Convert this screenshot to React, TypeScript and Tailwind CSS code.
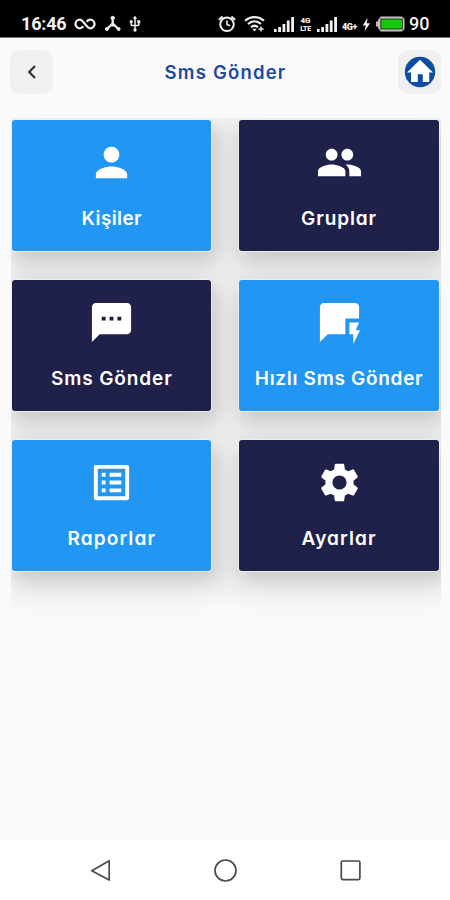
import React from 'react';
import type { IconType } from 'react-icons';
import { MdPerson, MdPeople, MdSms, MdQuickreply, MdListAlt, MdSettings, MdUsb } from 'react-icons/md';

interface MenuItem {
  label: string;
  icon: IconType;
  color: string;
  text: string;
}

const menuItems: MenuItem[] = [
  { label: 'Kişiler', icon: MdPerson, color: 'bg-[#2196f3]', text: 'tracking-[0.4px]' },
  { label: 'Gruplar', icon: MdPeople, color: 'bg-[#20214a]', text: 'tracking-[0.9px]' },
  { label: 'Sms Gönder', icon: MdSms, color: 'bg-[#20214a]', text: 'tracking-[0.9px]' },
  { label: 'Hızlı Sms Gönder', icon: MdQuickreply, color: 'bg-[#2196f3]', text: 'tracking-[0.7px]' },
  { label: 'Raporlar', icon: MdListAlt, color: 'bg-[#2196f3]', text: 'tracking-[1.1px]' },
  { label: 'Ayarlar', icon: MdSettings, color: 'bg-[#20214a]', text: 'tracking-[1.1px]' },
];

const SignalBars: React.FC<{ className?: string }> = ({ className }) => (
  <svg className={className} width="21" height="17" viewBox="0 0 21 17" fill="#f2f2f2">
    <rect x="0" y="13" width="2.6" height="3" />
    <rect x="4.2" y="11" width="2.8" height="5" />
    <rect x="8.5" y="8" width="2.8" height="8" />
    <rect x="12.8" y="4.5" width="2.8" height="11.5" />
    <rect x="17.2" y="1" width="2.8" height="15" />
  </svg>
);

const StatusBar: React.FC = () => (
  <div className="h-[38px] bg-black flex items-center pt-[11px] text-[#f2f2f2] border-b border-[#777] font-[Roboto,sans-serif] shrink-0">
    <span className="ml-[21px] w-[46px] text-[18px] leading-none font-bold tracking-[-0.2px]">16:46</span>
    <svg className="ml-[7px]" width="22" height="14" viewBox="0 0 22 14" fill="none" stroke="#eee" strokeWidth="2.3">
      <path d="M9.300 9.300C8.300 10.600 7.200 11.300 5.800 11.300a4.300 4.300 0 0 1 0-8.600C9.500 2.700 12.500 11.300 16.200 11.300a4.300 4.300 0 0 0 0-8.600C14.800 2.700 13.700 3.400 12.700 4.700" />
    </svg>
    <svg className="ml-[8px]" width="18" height="18" viewBox="0 0 18 18" fill="#eee" stroke="#eee">
      <path d="M8.700 3v5.500M8.700 8.500 3.500 13.500M8.700 8.500 14 13.500" fill="none" strokeWidth="2.200" />
      <path d="M8.700 6 5.500 11.500h6.400z" stroke="none" />
      <circle cx="8.700" cy="3" r="1.700" />
      <circle cx="2.900" cy="14" r="1.500" />
      <circle cx="14.600" cy="14" r="1.500" />
    </svg>
    <MdUsb className="ml-[4px] w-[18px] h-[18px]" />

    <svg className="ml-[73px]" width="20" height="18" viewBox="0 0 20 18" fill="none" stroke="#eee" strokeWidth="2">
      <circle cx="10" cy="9.300" r="6.800" />
      <path d="M10 5.500v4l3 1.300" strokeWidth="1.600" />
      <path d="M1.800 4.800 5.600 1.600M18.200 4.800 14.400 1.600" />
    </svg>
    <svg className="ml-[7px]" width="21" height="18" viewBox="0 0 21 18" fill="none" stroke="#eee" strokeWidth="2.200">
      <path d="M1 5.800C6.500.9 14.500.9 20 5.800M4 9c4-3.500 9-3.500 13 0M7 12.200c2.300-1.900 4.700-1.900 7 0" />
      <path d="M8.300 13.700h4.400L10.500 16.500z" fill="#eee" stroke="none" />
      <path d="M17 11.500v5M14.500 14h5" strokeWidth="1.400" />
    </svg>
    <SignalBars className="ml-[9px]" />
    <div className="ml-[4px] w-[13px] flex flex-col items-center font-black">
      <span className="text-[8px] leading-[9px]">4G</span>
      <span className="text-[7px] leading-[8px] tracking-[-0.3px]">LTE</span>
    </div>
    <SignalBars className="ml-[5px]" />
    <span className="ml-[4px] mt-[6px] w-[18px] text-[9px] leading-none font-black tracking-[-0.4px]">4G+</span>
    <svg className="ml-[2px]" width="9" height="15" viewBox="0 0 10 15" fill="#eee">
      <path d="M6.200 0 .8 8.500h3.400L2.800 15 9 6H5.300z" />
    </svg>
    <svg className="ml-[5px]" width="30" height="16" viewBox="0 0 30 16">
      <path d="M0 5.500h2V4l2.800-3.500H26L28.500 3v10L26 15.500H4.800L2 12v-1.500H0z" fill="#c3bfc3" />
      <rect x="4.800" y="3" width="21.500" height="10" fill="#14c80b" stroke="#171f15" strokeWidth=".8" />
    </svg>
    <span className="ml-[3px] text-[18px] leading-none font-medium">90</span>
  </div>
);

const Header: React.FC = () => (
  <header className="flex items-center justify-between pl-[10px] pr-[9px] pt-3 shrink-0">
    <button className="w-[43px] h-[44px] rounded-[10px] bg-[#f0f0f0] flex items-center justify-center">
      <svg width="12" height="16" viewBox="0 0 12 16" fill="none" stroke="#333" strokeWidth="2.200">
        <path d="M9 2 3.200 8 9 14" />
      </svg>
    </button>
    <h1 className="text-[18.500px] leading-6 font-semibold text-[#204a9b] tracking-[1.200px]">Sms Gönder</h1>
    <button className="w-[43px] h-[44px] rounded-[10px] bg-[#f0f0f0] flex items-center justify-center">
      <svg width="32" height="32" viewBox="0 0 32 32">
        <circle cx="16" cy="16" r="15.200" fill="#0b4da2" />
        <path d="M16 3.800 29 16.500h-3.800V26h-6.400v-7.800h-5V26H7v-9.500H3z" fill="#fff" />
      </svg>
    </button>
  </header>
);

const MenuCard: React.FC<{ item: MenuItem }> = ({ item }) => {
  const Icon = item.icon;
  return (
    <button className={`h-[131px] rounded-[3px] flex flex-col items-center pt-[19px] text-white shadow-[0_0_0_1px_rgba(240,240,240,0.8),4px_8px_16px_rgba(0,0,0,0.09),2px_10px_30px_10px_rgba(0,0,0,0.12)] ${item.color}`}>
      <Icon className="w-[47px] h-[47px]" />
      <span className={`mt-[21px] text-[19px] leading-6 font-semibold whitespace-nowrap ${item.text}`}>{item.label}</span>
    </button>
  );
};

const NavBar: React.FC = () => (
  <nav className="h-[60px] bg-white flex items-center justify-between pl-[89px] pr-[87px] shrink-0">
    <svg width="24" height="26" viewBox="0 0 24 26" fill="none" stroke="#4a4a4a" strokeWidth="1.700" strokeLinejoin="round">
      <path d="M20.200 3.700v19.400L2.800 13.700z" />
    </svg>
    <svg width="26" height="26" viewBox="0 0 26 26" fill="none" stroke="#4a4a4a" strokeWidth="1.700">
      <circle cx="13.500" cy="13.500" r="10.500" />
    </svg>
    <svg width="26" height="26" viewBox="0 0 26 26" fill="none" stroke="#4a4a4a" strokeWidth="1.700">
      <rect x="4.300" y="4" width="18.600" height="18.600" rx="1.500" />
    </svg>
  </nav>
);

const App: React.FC = () => {
  return (
    <div className="w-[450px] h-[900px] bg-[#fafafa] flex flex-col overflow-hidden font-[Inter,sans-serif] [font-feature-settings:'cv11']">
      <StatusBar />
      <Header />
      <main className="flex-1 mt-6 ml-[11px] mr-[9px] overflow-hidden">
        <div className="grid grid-cols-2 gap-x-7 gap-y-[29px] pl-[1.2px] pr-[2.3px] pt-[2px]">
          {menuItems.map((item) => (
            <MenuCard key={item.label} item={item} />
          ))}
        </div>
      </main>
      <NavBar />
    </div>
  );
};

export default App;
